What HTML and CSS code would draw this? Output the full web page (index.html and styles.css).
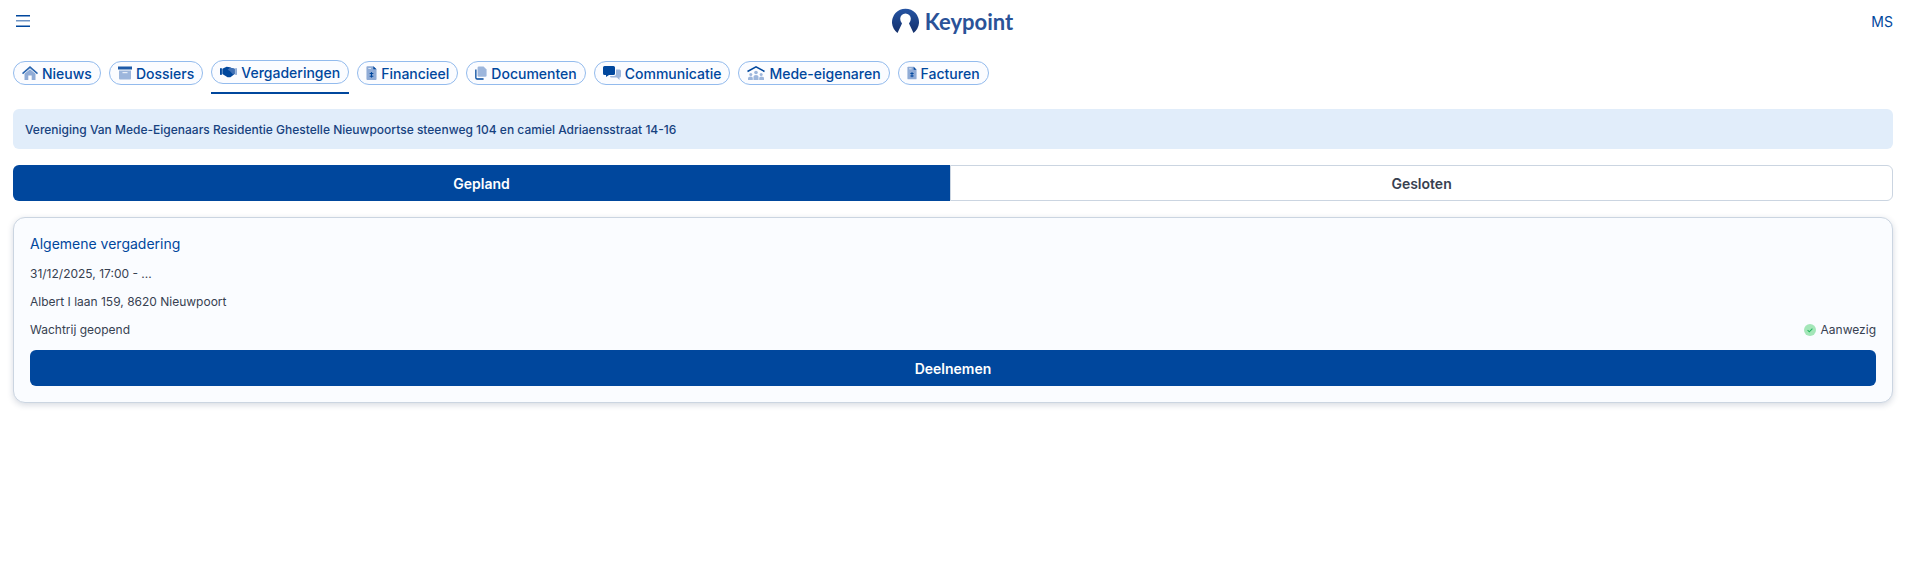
FILE: index.html
```html
<!DOCTYPE html>
<html lang="nl">
<head>
<meta charset="utf-8">
<title>Keypoint</title>
<link rel="stylesheet" href="styles.css">
</head>
<body>
<header class="topbar">
  <button class="menu" aria-label="Menu">
    <svg width="14" height="12" viewBox="0 0 14 12"><rect y="0" width="14" height="1.500" fill="#00479d"/><rect y="5" width="14" height="1.500" fill="#6f95c6"/><rect y="10.500" width="14" height="1.500" fill="#00479d"/></svg>
  </button>
  <div class="logo">
    <svg class="logo-mark" width="27" height="26" viewBox="0 0 27 26">
      <defs><linearGradient id="lg" x1="0" y1="0" x2="0" y2="1"><stop offset="0" stop-color="#2554a3"/><stop offset="1" stop-color="#14306b"/></linearGradient></defs>
      <path d="M5.500 25 A13.500 13.500 0 1 1 21.500 25 L17 15.500 Q18.800 13.500 18.800 10.800 A5.300 5.300 0 0 0 8.200 10.800 Q8.200 13.500 10 15.500 Z" fill="url(#lg)"/>
    </svg>
    <span class="logo-text">Keypoint</span>
  </div>
  <span class="user">MS</span>
</header>
<nav class="tabs">
  <div class="tab-wrap"><a class="pill">
    <svg class="ico" viewBox="0 0 16 14"><path d="M8 0 L0 7 L1 8.200 L8 2.200 L15 8.200 L16 7Z" fill="#2a66b0"/><path d="M2.500 7.800 L8 3.200 L13.500 7.800 V14 H9.700 V9.500 H6.300 V14 H2.500Z" fill="#8fabd6"/></svg>Nieuws</a></div>
  <div class="tab-wrap"><a class="pill">
    <svg class="ico ico-narrow" viewBox="0 0 14 14"><rect x="0" y="0.500" width="14" height="3" fill="#1d5aa8"/><path d="M1 4.500 H13 V12.500 Q13 13.500 12 13.500 H2 Q1 13.500 1 12.500Z" fill="#9db6dc"/><rect x="4.500" y="6" width="5" height="1.200" fill="#e8eef7"/></svg>Dossiers</a></div>
  <div class="tab-wrap active"><a class="pill">
    <svg class="ico ico-hands" viewBox="0 0 18 12"><rect x="0" y="2" width="2" height="7" fill="#00479d"/><rect x="16" y="2" width="2" height="7" fill="#8fabd6"/><path d="M2.500 2.500 L7 0.500 L10.500 1 L13 2 L15.500 2.500 V8 L11 11.500 L8 11.500 L2.500 8Z" fill="#00479d"/><path d="M8 3.500 L10.500 1.500 L15.500 2.500 V8 L14 9 L10.500 5Z" fill="#3f70b5"/></svg>Vergaderingen</a></div>
  <div class="tab-wrap"><a class="pill">
    <svg class="ico ico-doc" viewBox="0 0 12 16"><path d="M1.500 0.500 H8 L11.500 4 V14.500 Q11.500 15.500 10.500 15.500 H1.500 Q0.500 15.500 0.500 14.500 V1.500 Q0.500 0.500 1.500 0.500Z" fill="#8fabd6"/><path d="M8 0.500 L11.500 4 H8Z" fill="#00479d"/><rect x="2.500" y="2.500" width="3" height="1" fill="#e8eef7"/><rect x="5.400" y="7" width="1.200" height="6" fill="#00479d"/><rect x="4" y="8" width="4" height="1.100" fill="#00479d"/><rect x="4" y="11" width="4" height="1.100" fill="#00479d"/></svg>Financieel</a></div>
  <div class="tab-wrap"><a class="pill">
    <svg class="ico ico-stack" viewBox="0 0 14 16"><path d="M1 4 V13.500 Q1 15 2.500 15 H10" fill="none" stroke="#00479d" stroke-width="1.500"/><path d="M4.500 0.500 H10 L13.500 4 V11 Q13.500 12.500 12 12.500 H4.500 Q3 12.500 3 11 V2 Q3 0.500 4.500 0.500Z" fill="#9db6dc"/></svg>Documenten</a></div>
  <div class="tab-wrap"><a class="pill">
    <svg class="ico ico-wide" viewBox="0 0 18 14"><path d="M1.500 0 H10.500 Q12 0 12 1.500 V7.500 Q12 9 10.500 9 H6 L3 11 V9 H1.500 Q0 9 0 7.500 V1.500 Q0 0 1.500 0Z" fill="#00479d"/><path d="M13 3.500 H16.500 Q18 3.500 18 5 V10 Q18 11.500 16.500 11.500 V14 L14 11.500 H8.500 Q7 11.500 7 10 H11 Q13 10 13 8Z" fill="#9db6dc"/></svg>Communicatie</a></div>
  <div class="tab-wrap"><a class="pill">
    <svg class="ico ico-wide" viewBox="0 0 18 14"><path d="M0.500 5.500 L9 0.800 L17.500 5.500" fill="none" stroke="#00479d" stroke-width="1.500"/><circle cx="9" cy="6.500" r="1.800" fill="#9db6dc"/><path d="M6.500 14 V10.800 Q6.500 9 9 9 Q11.500 9 11.500 10.800 V14Z" fill="#9db6dc"/><circle cx="3.800" cy="8.500" r="1.500" fill="#9db6dc"/><path d="M1 14 V12 Q1 10.500 3.800 10.500 Q5.800 10.500 5.800 12 V14Z" fill="#9db6dc"/><circle cx="14.200" cy="8.500" r="1.500" fill="#9db6dc"/><path d="M12.200 14 V12 Q12.200 10.500 14.200 10.500 Q17 10.500 17 12 V14Z" fill="#9db6dc"/></svg>Mede-eigenaren</a></div>
  <div class="tab-wrap"><a class="pill">
    <svg class="ico ico-slim" viewBox="0 0 12 16"><path d="M1.500 0.500 H8 L11.500 4 V14.500 Q11.500 15.500 10.500 15.500 H1.500 Q0.500 15.500 0.500 14.500 V1.500 Q0.500 0.500 1.500 0.500Z" fill="#8fabd6"/><path d="M8 0.500 L11.500 4 H8Z" fill="#00479d"/><rect x="2.500" y="2.500" width="3" height="1" fill="#e8eef7"/><rect x="5.400" y="7" width="1.200" height="6" fill="#00479d"/><rect x="4" y="8" width="4" height="1.100" fill="#00479d"/><rect x="4" y="11" width="4" height="1.100" fill="#00479d"/></svg>Facturen</a></div>
</nav>
<main class="content">
  <div class="notice">Vereniging Van Mede-Eigenaars Residentie Ghestelle Nieuwpoortse steenweg 104 en camiel Adriaensstraat 14-16</div>
  <div class="segments">
    <button class="segment selected">Gepland</button>
    <button class="segment">Gesloten</button>
  </div>
  <section class="card">
    <h2 class="card-title">Algemene vergadering</h2>
    <p class="line">31/12/2025, 17:00 - ...</p>
    <p class="line">Albert I laan 159, 8620 Nieuwpoort</p>
    <div class="line status-row">
      <span>Wachtrij geopend</span>
      <span class="present">
        <svg width="12" height="12" viewBox="0 0 12 12"><circle cx="6" cy="6" r="6" fill="#a3e6b8"/><path d="M3.600 6.200 L5.300 7.800 L8.400 4.600" fill="none" stroke="#22b560" stroke-width="1.100"/></svg>
        Aanwezig
      </span>
    </div>
    <button class="join">Deelnemen</button>
  </section>
</main>
</body>
</html>
```
FILE: styles.css
```css
* { box-sizing: border-box; }
html, body { margin: 0; padding: 0; }
body {
  font-family: Inter, "Liberation Sans", sans-serif;
  background: #fff;
  color: #374151;
  height: 565px;
  overflow: hidden;
}
button { font-family: inherit; }
.topbar {
  height: 42px;
  padding: 0 16px;
  display: grid;
  grid-template-columns: 1fr auto 1fr;
  align-items: center;
}
.menu {
  padding: 0;
  border: 0;
  background: none;
  justify-self: start;
  display: flex;
}
.logo { display: flex; align-items: center; gap: 6px; margin-left: -4px; }
.logo-text {
  font-family: Lato, sans-serif;
  font-size: 22px;
  font-weight: 700;
  color: #2a5298;
}
.user {
  justify-self: end;
  font-size: 14px;
  color: #00479d;
}
.tabs {
  display: flex;
  gap: 8px;
  padding: 18px 13px 0;
  height: 52px;
}
.tab-wrap { padding-top: 1px; }
.tab-wrap.active {
  padding-top: 0;
  padding-bottom: 8px;
  border-bottom: 2px solid #00479d;
  height: 34px;
}
.pill {
  display: flex;
  align-items: center;
  gap: 4px;
  height: 24px;
  padding: 0 8px;
  border: 1px solid #93bbed;
  border-radius: 12px;
  background: #fbfcff;
  color: #00479d;
  font-size: 14px;
  font-weight: 500;
  white-space: nowrap;
}
.ico { width: 16px; height: 16px; flex: none; }
.ico-wide { width: 18px; }
.ico-hands { width: 17px; }
.ico-doc { width: 11px; }
.ico-slim { width: 10px; }
.ico-narrow { width: 14px; }
.ico-stack { width: 12px; }
.content {
  padding: 15px 16px 0 13px;
  display: flex;
  flex-direction: column;
  gap: 16px;
}
.notice {
  height: 40px;
  padding: 0 12px;
  display: flex;
  align-items: center;
  background: #e1edfa;
  border-radius: 6px;
  font-size: 12px;
  font-weight: 500;
  color: #17427f;
}
.segments {
  display: flex;
  height: 36px;
}
.segment {
  flex: 1 1 auto;
  padding: 0;
  border: 1px solid #cbd5e1;
  border-radius: 0 6px 6px 0;
  background: #fff;
  color: #374151;
  font-size: 14px;
  font-weight: 600;
}
.segment.selected {
  background: #00479d;
  border: 0;
  border-radius: 6px 0 0 6px;
  color: #fff;
}
.card {
  height: 186px;
  padding: 16px;
  background: #fafcff;
  border: 1px solid #cbd5e1;
  border-radius: 12px;
  box-shadow: 0 2px 6px rgba(30, 50, 90, 0.18);
}
.card-title {
  margin: 0;
  font-size: 14px;
  font-weight: 400;
  line-height: 20px;
  color: #00479d;
}
.line {
  margin: 0;
  padding-top: 11px;
  font-size: 12px;
  line-height: 18px;
  color: #374151;
}
.line + .line { padding-top: 10px; }
.status-row { display: flex; justify-content: space-between; }
.present { display: flex; align-items: center; gap: 5px; }
.join {
  display: block;
  width: 100%;
  height: 36px;
  margin-top: 11px;
  border: 0;
  border-radius: 6px;
  background: #00479d;
  color: #fff;
  font-size: 14px;
  font-weight: 600;
}
```
